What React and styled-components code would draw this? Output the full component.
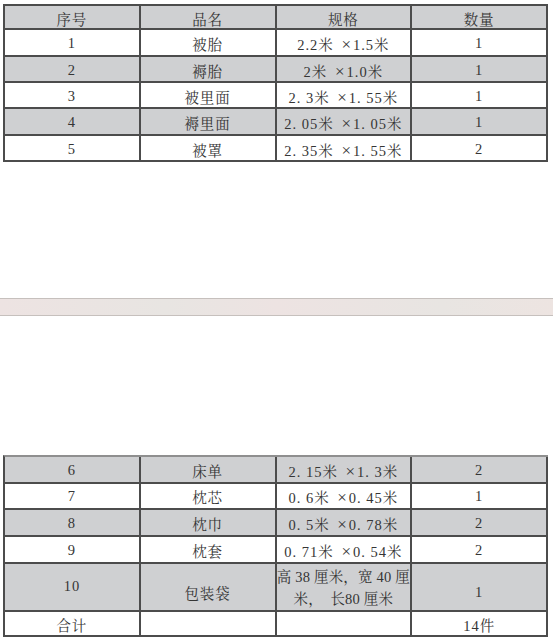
import React from "react";
import styled, { createGlobalStyle } from "styled-components";

const GlobalStyle = createGlobalStyle`
  html, body {
    margin: 0;
    padding: 0;
    background: #ffffff;
  }
  body {
    font-family: "Liberation Serif", "Noto Serif CJK SC", "Noto Sans CJK SC", serif;
    color: #353535;
  }
`;

const topRows = [
  ["1", "被胎", "2.2米 ×1.5米", "1"],
  ["2", "褥胎", "2米 ×1.0米", "1"],
  ["3", "被里面", "2. 3米 ×1. 55米", "1"],
  ["4", "褥里面", "2. 05米 ×1. 05米", "1"],
  ["5", "被罩", "2. 35米 ×1. 55米", "2"],
];

const bottomRows = [
  ["6", "床单", "2. 15米 ×1. 3米", "2"],
  ["7", "枕芯", "0. 6米 ×0. 45米", "1"],
  ["8", "枕巾", "0. 5米 ×0. 78米", "2"],
  ["9", "枕套", "0. 71米 ×0. 54米", "2"],
];

// the multiply sign in the scan is drawn wide, so it gets its own span
const Spec = ({ text }) => {
  const parts = text.split("×");
  if (parts.length < 2) return text;
  return (
    <>
      {parts[0]}
      <Times>×</Times>
      {parts[1]}
    </>
  );
};

const Row = ({ cells, shaded, height }) => (
  <>
    {cells.map((c, i) => (
      <Cell key={i} $shaded={shaded} $height={height}>
        {i === 2 ? <Spec text={c} /> : c}
      </Cell>
    ))}
  </>
);

const App = () => {
  return (
    <>
      <GlobalStyle />
      <Page>
        <Grid>
          <Row cells={["序号", "品名", "规格", "数量"]} shaded height={24} />
          {topRows.map((r, i) => (
            <Row key={r[0]} cells={r} shaded={i % 2 === 1} height={i % 3 === 0 ? 27 : 26} />
          ))}
        </Grid>

        <PageBreak />

        <Grid $light>
          {bottomRows.map((r, i) => (
            <Row key={r[0]} cells={r} shaded={i % 2 === 0} height={i < 2 ? 26.5 : 27} />
          ))}
          <Cell $shaded $height={48}>
            <Lift>10</Lift>
          </Cell>
          <Cell $shaded $height={48}>
            <Drop>包装袋</Drop>
          </Cell>
          <Cell $shaded $height={48}>
            <Wrapped>{"高 38 厘米，宽 40 厘\n米，　长80 厘米"}</Wrapped>
          </Cell>
          <Cell $shaded $height={48}>
            <Drop>1</Drop>
          </Cell>
          <Row cells={["合计", "", "", "14件"]} height={25} />
        </Grid>
      </Page>
    </>
  );
};

const Page = styled.div`
  display: flex;
  flex-direction: column;
  padding: 4px 5px 0 3px;
  width: 553px;
  box-sizing: border-box;
`;

const Grid = styled.div`
  display: grid;
  grid-template-columns: repeat(4, 1fr);
  border-top: 2px solid ${(p) => (p.$light ? "#8f8f8f" : "#4c4c4c")};
  border-left: 2px solid #4c4c4c;
`;

const Cell = styled.div`
  display: flex;
  align-items: center;
  justify-content: center;
  box-sizing: border-box;
  height: ${(p) => p.$height}px;
  padding-top: 2px;
  border-right: 2px solid #4c4c4c;
  border-bottom: 2px solid #4c4c4c;
  background: ${(p) => (p.$shaded ? "#cfd0d2" : "#ffffff")};
  font-size: 14.5px;
  letter-spacing: 1px;
  white-space: pre;
`;

const Times = styled.span`
  display: inline-block;
  font-size: 17px;
  line-height: 1;
  transform: translateY(1px);
  margin: 0 1px 0 3px;
`;

const Lift = styled.span`
  margin-top: -4px;
`;

const Drop = styled.span`
  margin-top: 8px;
`;

const Wrapped = styled.span`
  white-space: pre-line;
  text-align: center;
  line-height: 22px;
  letter-spacing: 0.2px;
`;

const PageBreak = styled.div`
  margin: 136px -5px 0 -3px;
  height: 18px;
  box-sizing: border-box;
  border-top: 1px solid #c6c0bd;
  border-bottom: 1px solid #c6c0bd;
  background: linear-gradient(90deg, #ede3e2, #e8e5e2 30%, #ede3e2 50%, #e8e5e2 80%, #ede4e1);
  margin-bottom: 139px;
`;

export default App;
